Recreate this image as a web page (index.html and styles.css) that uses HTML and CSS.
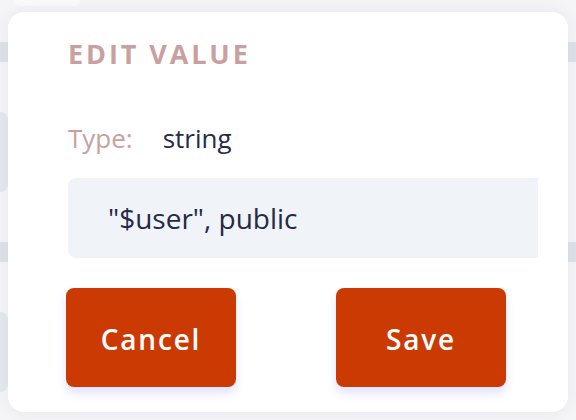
FILE: index.html
```html
<!DOCTYPE html>
<html>
<head>
<meta charset="utf-8">
<link rel="stylesheet" href="styles.css">
</head>
<body>
<div class="backdrop">
  <div class="top-chip"></div>
  <div class="band band-1"></div>
  <div class="side-pill pill-1"></div>
  <div class="band band-2"></div>
  <div class="side-pill pill-2"></div>
</div>
<div class="modal">
  <div class="modal-body">
    <h2 class="title">EDIT VALUE</h2>
    <div class="type-row">
      <span class="type-label">Type:</span>
      <span class="type-value">string</span>
    </div>
    <div class="value-box">"$user", public</div>
    <div class="actions">
      <button class="btn">Cancel</button>
      <button class="btn">Save</button>
    </div>
  </div>
</div>
</body>
</html>
```
FILE: styles.css
```css
html, body {
  margin: 0;
  padding: 0;
}
body {
  width: 576px;
  height: 420px;
  overflow: hidden;
  background: #f5f5f8;
  font-family: "Open Sans", "DejaVu Sans", sans-serif;
  position: relative;
}
.backdrop {
  display: flex;
  flex-direction: column;
  height: 420px;
}
.top-chip {
  margin-left: 14px;
  width: 66px;
  height: 6px;
  border-radius: 0 0 10px 10px;
  background: #fafafc;
}
.band {
  height: 20px;
  background: #dfe2ea;
}
.band-1 { margin-top: 36px; }
.band-2 { margin-top: 50px; }
.side-pill {
  width: 8px;
  height: 80px;
  border-radius: 0 14px 14px 0;
  background: #e5e8f0;
}
.pill-1 { margin-top: 50px; }
.pill-2 { margin-top: 50px; }

.modal {
  position: absolute;
  left: 8px;
  top: 12px;
  width: 560px;
  height: 400px;
  background: #ffffff;
  border-radius: 16px;
  box-shadow: 0 0 16px rgba(40, 40, 70, 0.07);
}
.modal-body {
  padding: 0 30px 0 60px;
}
.title {
  margin: 25px 0 0;
  font-size: 27px;
  font-weight: 700;
  letter-spacing: 2.9px;
  color: #c9a09f;
  line-height: 34px;
}
.type-row {
  margin-top: 52px;
  display: flex;
  gap: 30px;
  font-size: 26px;
  line-height: 30px;
}
.type-label { color: #c9a09f; }
.type-value { color: #262a48; }
.value-box {
  margin-top: 25px;
  height: 80px;
  box-sizing: border-box;
  padding: 0 40px;
  display: flex;
  align-items: center;
  background: #f0f3f8;
  border-radius: 8px 0 0 8px;
  font-size: 28px;
  color: #262a48;
}
.actions {
  margin-top: 30px;
  margin-left: -2px;
  display: flex;
  gap: 100px;
}
.btn {
  width: 170px;
  height: 99px;
  padding: 2px 0 0;
  border: none;
  border-radius: 8px;
  background: #cc3a03;
  color: #ffffff;
  font-family: inherit;
  font-size: 28px;
  font-weight: 600;
  letter-spacing: 1.8px;
  box-shadow: 0 6px 10px rgba(90, 100, 230, 0.18);
}
```
